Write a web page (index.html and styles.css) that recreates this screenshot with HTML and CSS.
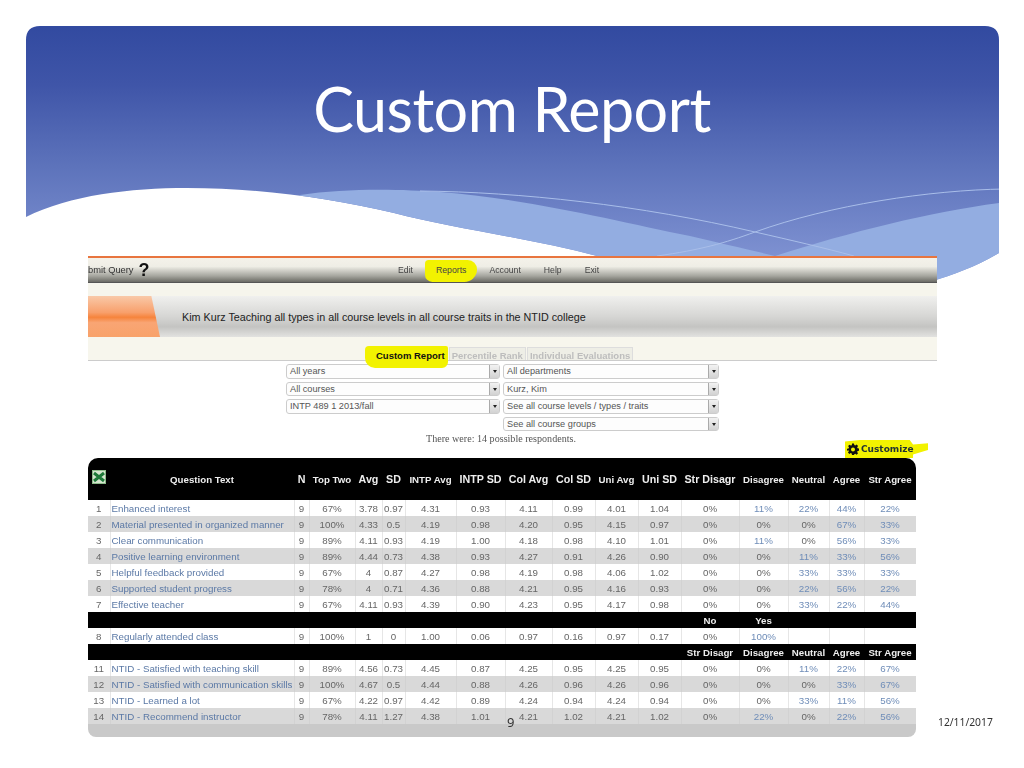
FILE: index.html
```html
<!DOCTYPE html>
<html lang="en">
<head>
<meta charset="utf-8">
<title>Custom Report</title>
<link rel="stylesheet" href="styles.css">
</head>
<body>
<div class="slide">
  <svg class="banner" viewBox="0 0 1024 768" aria-hidden="true">
    <defs>
      <linearGradient id="sky" x1="0" y1="26" x2="0" y2="260" gradientUnits="userSpaceOnUse">
        <stop offset="0" stop-color="#324aa0"/>
        <stop offset="0.25" stop-color="#3f55a8"/>
        <stop offset="0.6" stop-color="#5d73bb"/>
        <stop offset="1" stop-color="#7f92d2"/>
      </linearGradient>
      <clipPath id="shape">
        <path d="M26 40Q26 26 40 26H985Q999 26 999 40V253C975 267 955 274 930 282L760 300C700 290 650 270 597 256C530 238 450 228 394 213C330 198 260 188 187 188C130 188 70 195 26 217Z"/>
      </clipPath>
    </defs>
    <g clip-path="url(#shape)">
      <rect x="20" y="20" width="985" height="290" fill="url(#sky)"/>
      <path d="M300 195C345 188 400 189 440 192C530 199 620 222 690 236C720 243 750 250 775 256C850 232 930 212 999 203V310H300Z" fill="#93ade1"/>
      <path d="M420 191C520 192 640 205 755 232C790 240 825 248 854 256" fill="none" stroke="#a9bee9" stroke-width="1"/>
      <path d="M657 256C700 250 725 243 755 232C830 205 930 190 1005 189" fill="none" stroke="#a9bee9" stroke-width="1"/>
    </g>
  </svg>

  <h1 class="title">Custom Report</h1>

  <div class="shot">
    <div class="topbar">
      <div class="query">bmit Query <span class="help">?</span></div>
      <nav class="nav">
        <span>Edit</span>
        <span class="mark">Reports</span>
        <span>Account</span>
        <span>Help</span>
        <span>Exit</span>
      </nav>
    </div>
    <div class="strip"></div>
    <div class="heading">
      <div class="swoosh"></div>
      <p>Kim Kurz Teaching all types in all course levels in all course traits in the NTID college</p>
    </div>
    <div class="tabs">
      <span class="tab active">Custom Report</span>
      <span class="tab">Percentile Rank</span>
      <span class="tab">Individual Evaluations</span>
    </div>
    <div class="filters">
      <div class="select">All years<i></i></div>
      <div class="select">All departments<i></i></div>
      <div class="select">All courses<i></i></div>
      <div class="select">Kurz, Kim<i></i></div>
      <div class="select">INTP 489 1 2013/fall<i></i></div>
      <div class="select">See all course levels / types / traits<i></i></div>
      <div class="select second">See all course groups<i></i></div>
    </div>
    <p class="respondents">There were: 14 possible respondents.</p>
    <div class="customize-row">
      <div class="customize">
        <svg class="gear" viewBox="0 0 24 24" aria-hidden="true"><path d="M10 1h4l.6 3.2 2 .8L19.300 3.200l2.800 2.800-1.800 2.700.8 2 3.200.6v4l-3.200.6-.8 2 1.800 2.700-2.800 2.800-2.700-1.800-2 .8L14 24h-4l-.6-3.200-2-.8-2.700 1.800-2.800-2.800 1.800-2.700-.8-2L0 15.500v-4l3.200-.6.8-2-1.800-2.700L5 3.400l2.700 1.800 2-.8zM12 9a4 4 0 1 0 0 8 4 4 0 0 0 0-8z" fill-rule="evenodd"/></svg>
        Customize
      </div>
    </div>
    <div class="report">
      <table>
        <colgroup>
          <col class="w22"><col class="w184"><col class="w15"><col class="w46"><col class="w27"><col class="w23"><col class="w51"><col class="w49"><col class="w47"><col class="w43"><col class="w43"><col class="w43"><col class="w58"><col class="w49"><col class="w41"><col class="w35"><col class="w52">
        </colgroup>
        <thead>
          <tr class="head">
            <th><svg class="xls" viewBox="0 0 14 14" aria-hidden="true"><rect width="14" height="14" fill="#8dbb8a"/><rect x="1" y="1" width="12" height="12" fill="#d6e6cf"/><path d="M2 3l10 8M12 3L2 11" stroke="#1f7a3a" stroke-width="3"/></svg></th>
            <th class="sm">Question Text</th><th>N</th><th class="sm">Top Two</th><th>Avg</th><th>SD</th><th class="sm">INTP Avg</th><th>INTP SD</th><th>Col Avg</th><th>Col SD</th><th class="sm">Uni Avg</th><th>Uni SD</th><th>Str Disagr</th><th class="sm">Disagree</th><th class="sm">Neutral</th><th class="sm">Agree</th><th class="sm">Str Agree</th>
          </tr>
        </thead>
        <tbody>
          <tr><td>1</td><td class="q">Enhanced interest</td><td>9</td><td>67%</td><td>3.78</td><td>0.97</td><td>4.31</td><td>0.93</td><td>4.11</td><td>0.99</td><td>4.01</td><td>1.04</td><td>0%</td><td class="l">11%</td><td class="l">22%</td><td class="l">44%</td><td class="l">22%</td></tr>
          <tr class="alt"><td>2</td><td class="q">Material presented in organized manner</td><td>9</td><td>100%</td><td>4.33</td><td>0.5</td><td>4.19</td><td>0.98</td><td>4.20</td><td>0.95</td><td>4.15</td><td>0.97</td><td>0%</td><td>0%</td><td>0%</td><td class="l">67%</td><td class="l">33%</td></tr>
          <tr><td>3</td><td class="q">Clear communication</td><td>9</td><td>89%</td><td>4.11</td><td>0.93</td><td>4.19</td><td>1.00</td><td>4.18</td><td>0.98</td><td>4.10</td><td>1.01</td><td>0%</td><td class="l">11%</td><td>0%</td><td class="l">56%</td><td class="l">33%</td></tr>
          <tr class="alt"><td>4</td><td class="q">Positive learning environment</td><td>9</td><td>89%</td><td>4.44</td><td>0.73</td><td>4.38</td><td>0.93</td><td>4.27</td><td>0.91</td><td>4.26</td><td>0.90</td><td>0%</td><td>0%</td><td class="l">11%</td><td class="l">33%</td><td class="l">56%</td></tr>
          <tr><td>5</td><td class="q">Helpful feedback provided</td><td>9</td><td>67%</td><td>4</td><td>0.87</td><td>4.27</td><td>0.98</td><td>4.19</td><td>0.98</td><td>4.06</td><td>1.02</td><td>0%</td><td>0%</td><td class="l">33%</td><td class="l">33%</td><td class="l">33%</td></tr>
          <tr class="alt"><td>6</td><td class="q">Supported student progress</td><td>9</td><td>78%</td><td>4</td><td>0.71</td><td>4.36</td><td>0.88</td><td>4.21</td><td>0.95</td><td>4.16</td><td>0.93</td><td>0%</td><td>0%</td><td class="l">22%</td><td class="l">56%</td><td class="l">22%</td></tr>
          <tr><td>7</td><td class="q">Effective teacher</td><td>9</td><td>67%</td><td>4.11</td><td>0.93</td><td>4.39</td><td>0.90</td><td>4.23</td><td>0.95</td><td>4.17</td><td>0.98</td><td>0%</td><td>0%</td><td class="l">33%</td><td class="l">22%</td><td class="l">44%</td></tr>
          <tr class="band"><th colspan="12"></th><th class="sm">No</th><th class="sm">Yes</th><th colspan="3"></th></tr>
          <tr><td>8</td><td class="q">Regularly attended class</td><td>9</td><td>100%</td><td>1</td><td>0</td><td>1.00</td><td>0.06</td><td>0.97</td><td>0.16</td><td>0.97</td><td>0.17</td><td>0%</td><td class="l">100%</td><td></td><td></td><td></td></tr>
          <tr class="band"><th colspan="12"></th><th class="sm">Str Disagr</th><th class="sm">Disagree</th><th class="sm">Neutral</th><th class="sm">Agree</th><th class="sm">Str Agree</th></tr>
          <tr><td>11</td><td class="q">NTID - Satisfied with teaching skill</td><td>9</td><td>89%</td><td>4.56</td><td>0.73</td><td>4.45</td><td>0.87</td><td>4.25</td><td>0.95</td><td>4.25</td><td>0.95</td><td>0%</td><td>0%</td><td class="l">11%</td><td class="l">22%</td><td class="l">67%</td></tr>
          <tr class="alt"><td>12</td><td class="q">NTID - Satisfied with communication skills</td><td>9</td><td>100%</td><td>4.67</td><td>0.5</td><td>4.44</td><td>0.88</td><td>4.26</td><td>0.96</td><td>4.26</td><td>0.96</td><td>0%</td><td>0%</td><td>0%</td><td class="l">33%</td><td class="l">67%</td></tr>
          <tr><td>13</td><td class="q">NTID - Learned a lot</td><td>9</td><td>67%</td><td>4.22</td><td>0.97</td><td>4.42</td><td>0.89</td><td>4.24</td><td>0.94</td><td>4.24</td><td>0.94</td><td>0%</td><td>0%</td><td class="l">33%</td><td class="l">11%</td><td class="l">56%</td></tr>
          <tr class="alt"><td>14</td><td class="q">NTID - Recommend instructor</td><td>9</td><td>78%</td><td>4.11</td><td>1.27</td><td>4.38</td><td>1.01</td><td>4.21</td><td>1.02</td><td>4.21</td><td>1.02</td><td>0%</td><td class="l">22%</td><td>0%</td><td class="l">22%</td><td class="l">56%</td></tr>
        </tbody>
      </table>
      <div class="foot"></div>
    </div>
  </div>

  <span class="page-num">9</span>
  <span class="date">12/11/2017</span>
</div>
</body>
</html>
```
FILE: styles.css
```css
* { box-sizing: border-box; }
html, body { margin: 0; padding: 0; background: #fff; }
.slide {
  position: relative;
  width: 1024px;
  height: 768px;
  overflow: hidden;
  font-family: "Liberation Sans", Arial, sans-serif;
}
.banner { position: absolute; left: 0; top: 0; width: 1024px; height: 768px; }
.title {
  position: absolute;
  left: 0;
  top: 71px;
  width: 1024px;
  margin: 0;
  text-align: center;
  font: 400 61px/76px "Lato", sans-serif;
  letter-spacing: -0.5px;
  color: #fff;
}
.shot {
  position: absolute;
  left: 88px;
  top: 256px;
  width: 849px;
  background: transparent;
  filter: blur(0.4px);
}
.topbar {
  display: flex;
  align-items: center;
  height: 27px;
  border-top: 2px solid #e8753f;
  border-bottom: 1px solid #555;
  background: linear-gradient(#f4f2ea 0%, #efeee6 35%, #a5a59e 75%, #6a6a64 100%);
  font-size: 8.700px;
  color: #444;
}
.query { display: flex; align-items: center; gap: 5px; width: 310px; font-size: 9.300px; color: #333; }
.help { font: 700 18px/18px "Liberation Sans", sans-serif; color: #111; }
.nav { display: flex; gap: 23px; }
.mark { position: relative; z-index: 0; }
.mark::before {
  content: "";
  position: absolute;
  z-index: -1;
  left: -11px;
  right: -11px;
  top: -5px;
  bottom: -7px;
  background: #f2f200;
  border-radius: 4px 10px 14px 8px;
}
.strip { height: 13px; background: #f6f5ec; }
.heading {
  position: relative;
  height: 41px;
  background: linear-gradient(#f0f0ee 0%, #d6d6d4 50%, #c4c4c2 75%, #e2e2e0 100%);
  display: flex;
  align-items: center;
  padding-left: 94px;
}
.heading p { margin: 0; font-size: 10.750px; color: #222; }
.swoosh {
  position: absolute;
  left: 0;
  top: 0;
  width: 72px;
  height: 41px;
  background: linear-gradient(#f9c9a8 0%, #f8a06c 40%, #f6843c 52%, #f9a574 65%, #f8a26a 100%);
  clip-path: polygon(0 0, 88% 0, 100% 100%, 0 100%);
}
.tabs {
  display: flex;
  align-items: flex-end;
  height: 24px;
  padding-left: 282px;
  gap: 1px;
  background: #f7f6ed;
  border-bottom: 1px solid #ccc;
}
.tab {
  position: relative;
  z-index: 0;
  padding: 2px 2px 0;
  height: 13px;
  font-size: 9.500px;
  line-height: 11px;
  font-weight: 700;
  color: #bdbdbd;
  background: #eeeee6;
  border: 1px solid #ddd;
  border-bottom: 0;
}
.tab.active { z-index: 1; color: #111; background: transparent; border-color: transparent; padding-left: 5px; }
.tab.active::before {
  content: "";
  position: absolute;
  z-index: -1;
  left: -6px;
  right: -1px;
  top: -2px;
  bottom: -8px;
  background: #f2f200;
  border-radius: 4px 2px 6px 10px;
}
.filters {
  display: grid;
  grid-template-columns: 214px 216px;
  column-gap: 3px;
  row-gap: 3px;
  margin: 3px 0 0 198px;
}
.select {
  position: relative;
  height: 14.500px;
  padding-left: 3px;
  border: 1px solid #ccc;
  border-radius: 3px;
  background: #fdfdfd;
  font-size: 9.200px;
  line-height: 12px;
  color: #555;
}
.select.second { grid-column: 2; }
.select i {
  position: absolute;
  right: 0;
  top: 0;
  bottom: 0;
  width: 10px;
  background: linear-gradient(#f2f2f2, #d2d2d2);
  border-left: 1px solid #aaa;
}
.select i::after {
  content: "";
  position: absolute;
  left: 2.500px;
  top: 5px;
  border: 2px solid transparent;
  border-top: 3px solid #222;
}
.respondents {
  margin: 1px 0 0 338px;
  font: 10.100px/13px "Liberation Serif", serif;
  color: #555;
}
.customize-row { display: flex; justify-content: flex-end; width: 828px; height: 18px; margin-top: -5px; }
.customize {
  display: flex;
  align-items: center;
  gap: 2px;
  width: 83px;
  margin-right: -12px;
  padding-left: 2px;
  font: 700 9px/18px "DejaVu Sans", sans-serif;
  color: #233;
  background: #f2f200;
  clip-path: polygon(0 8%, 18% 0, 78% 0, 82% 25%, 100% 18%, 100% 55%, 82% 80%, 82% 100%, 0 100%);
}
.gear { width: 12px; height: 12px; fill: #111; flex: none; }
.report { width: 828px; border-radius: 10px 10px 8px 8px; overflow: hidden; }
table {
  width: 828px;
  table-layout: fixed;
  border-collapse: collapse;
  font-size: 9.750px;
  color: #666;
}
.w22 { width: 22px; } .w184 { width: 184px; } .w15 { width: 15px; } .w46 { width: 46px; }
.w27 { width: 27px; } .w23 { width: 23px; } .w51 { width: 51px; } .w49 { width: 49px; }
.w47 { width: 47px; } .w43 { width: 43px; } .w58 { width: 58px; } .w41 { width: 41px; }
.w35 { width: 35px; } .w52 { width: 52px; }
th {
  padding: 0;
  background: #000;
  color: #eee;
  font-size: 10.700px;
  font-weight: 700;
  text-align: center;
  white-space: nowrap;
}
th.sm { font-size: 9.700px; }
.head th { height: 42px; vertical-align: middle; }
.xls { display: block; width: 14px; height: 14px; margin: -5px 0 0 4px; }
td {
  height: 16px;
  padding: 0;
  text-align: center;
  background: #fff;
  border-right: 1px solid #e6e6e6;
  white-space: nowrap;
  overflow: hidden;
}
.alt td { background: #d9d9d9; border-right-color: #d2d2d2; }
td.q { text-align: left; padding-left: 1px; color: #5b79a6; }
td.l { color: #6f8db8; }
.band th { height: 16px; }
.foot { height: 13px; background: #c9c9c9; }
.page-num {
  position: absolute;
  left: 507px;
  top: 713px;
  font: 13px/18px "Noto Sans", sans-serif;
  color: #333;
}
.date {
  position: absolute;
  left: 938px;
  top: 714px;
  font: 10.300px/16px "Noto Sans", sans-serif;
  color: #333;
}
```
